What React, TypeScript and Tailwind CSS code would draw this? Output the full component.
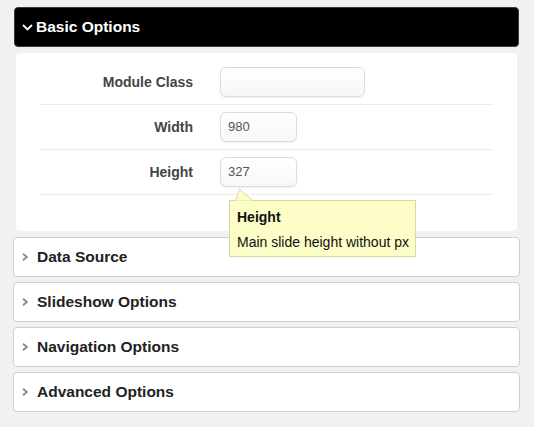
import React from 'react'

type Field = {
  label: string
  value: string
  width: string
}

const fields: Field[] = [
  { label: 'Module Class', value: '', width: 'w-[145px]' },
  { label: 'Width', value: '980', width: 'w-[77px]' },
  { label: 'Height', value: '327', width: 'w-[77px]' },
]

const collapsed = ['Data Source', 'Slideshow Options', 'Navigation Options', 'Advanced Options']

const ChevronDown = () => (
  <svg width="11" height="7" viewBox="0 0 11 7" className="mr-[3px]">
    <path d="M1 1 L5.5 5.5 L10 1" fill="none" stroke="#fff" strokeWidth="1.8" />
  </svg>
)

const ChevronRight = () => (
  <svg width="6" height="8" viewBox="0 0 6 8" className="mr-[9px]">
    <path d="M1 0.8 L4.8 4 L1 7.2" fill="none" stroke="#8a8a8a" strokeWidth="1.8" />
  </svg>
)

const Tooltip = () => (
  <div className="absolute left-[9px] top-[calc(100%+13px)] z-10">
    <svg width="20" height="13" viewBox="0 0 20 13" className="absolute left-[6px] -top-[12px]">
      <path d="M0.5 12.5 L4.5 0.8 L17.5 12.5" fill="#fdfdc8" stroke="#d9d9a6" strokeWidth="1" />
    </svg>
    <div className="w-[187px] h-[57px] bg-[#fdfdc8] border border-[#d9d9a6] pl-[7px] pt-[8px] text-[14px] text-[#111] whitespace-nowrap">
      <div className="font-bold leading-[16px]">Height</div>
      <div className="leading-[16px] mt-[9px]">Main slide height without px</div>
    </div>
  </div>
)

const App = () => {
  return (
    <div className="w-[534px] h-[427px] bg-[#f1f1f1] pl-[13px] pt-[7px] font-['Liberation_Sans',Arial,sans-serif] overflow-hidden">
      <div className="w-[507px]">
        <div className="mx-px h-[40px] bg-black rounded-[4px] border border-[#3a3a3a] flex items-center pl-[7px] text-white font-bold text-[15.5px]">
          <ChevronDown />
          Basic Options
        </div>

        <div className="mx-[3px] mt-[6px] bg-white rounded-[4px] px-[24px] pt-[7px] pb-[36px]">
          {fields.map((f) => (
            <div key={f.label} className="flex items-center py-[7px] border-b border-[#ececec]">
              <div className="w-[153px] text-right text-[14px] font-bold text-[#444]">{f.label}</div>
              <div className="relative ml-[27px]">
                <div
                  className={`${f.width} h-[30px] rounded-[6px] border border-[#dcdcdc] bg-gradient-to-b from-white to-[#f7f7f7] shadow-[0_1px_2px_rgba(0,0,0,0.06)] flex items-center px-[7px] text-[13px] text-[#555]`}
                >
                  {f.value}
                </div>
                {f.label === 'Height' && <Tooltip />}
              </div>
            </div>
          ))}
        </div>

        <div className="mt-[6px] flex flex-col gap-[5px]">
          {collapsed.map((title) => (
            <div
              key={title}
              className="h-[40px] bg-white border border-[#cfcfcf] rounded-[4px] flex items-center pl-[8px] text-[15.5px] font-bold text-[#222]"
            >
              <ChevronRight />
              {title}
            </div>
          ))}
        </div>
      </div>
    </div>
  )
}

export default App
